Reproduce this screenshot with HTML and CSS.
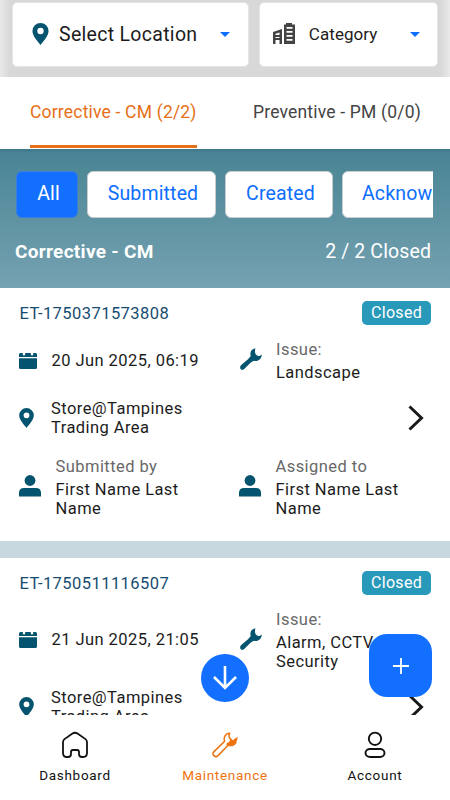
FILE: index.html
```html
<!DOCTYPE html>
<html lang="en">
<head>
<meta charset="utf-8">
<title>Maintenance</title>
<link rel="stylesheet" href="styles.css">
</head>
<body>
<svg class="defs" width="0" height="0">
  <symbol id="pin" viewBox="0 0 15 20"><path fill-rule="evenodd" d="M7.5 0A7.3 7.3 0 0 0 .2 7.3C.2 12 5 16.500 7.500 20 10 16.500 14.800 12 14.800 7.300A7.300 7.300 0 0 0 7.500 0zM7.500 4.400a2.900 2.900 0 1 1 0 5.800 2.900 2.900 0 0 1 0-5.800z"/></symbol>
  <symbol id="calendar" viewBox="0 0 18 17"><path d="M0 5V2.500Q0 1 1.500 1h2.300v1.200q0 1.200 1.200 1.200T6.200 2.200V1h5.600v1.200q0 1.200 1.200 1.200t1.200-1.200V1h2.300Q18 1 18 2.500V5zM0 6.300h18v9.200q0 1.500-1.500 1.500h-15Q0 17 0 15.500z"/></symbol>
  <symbol id="wrench" viewBox="0 0 22 22"><path d="M15.500.2c-4 .5-6.100 4-4.700 7.900L8 11.200 1.200 17.100c-1.800 1.700-1.200 4.700 1.300 4.700 1.100 0 1.900-.700 2.500-1.500l5.800-5.800 2.900-1.700c4.300 1 7.800-1.300 8.100-6.300-1.200 1.200-2.600 1.900-4.100 1.300-1.400-.6-2.500-1.900-2.600-3.400-.1-1.600-.3-2.600.4-4.200z"/></symbol>
  <symbol id="person" viewBox="0 0 22 22"><circle cx="11" cy="5.500" r="5.400"/><path d="M0 21.500v-3.500q0-5 5-5h12q5 0 5 5v3.500z"/></symbol>
  <symbol id="chevron" viewBox="0 0 16 26"><path d="M1.500 1.500 13.500 13 1.500 24.500" fill="none" stroke="#191919" stroke-width="3"/></symbol>
</svg>
<div class="app">
  <header class="filters">
    <div class="select location">
      <svg class="select-pin"><use href="#pin"/></svg><span>Select Location</span><i class="caret"></i>
    </div>
    <div class="select category">
      <svg class="building" viewBox="0 0 22 22"><path fill="#444" fill-rule="evenodd" d="M0 9 9 6v15H6.500v-4h-4v4H0zm2.500 1.800V12h4V9.500zM2.500 14v1h4v-1zM11 1.500h2V0h6v1.500h3V21H11zM13.500 4v1.800h6V4zm0 4v1.800h6V8zm0 4v1.800h6V12zm0 4v1.800h6V16z"/></svg><span>Category</span><i class="caret"></i>
    </div>
  </header>
  <nav class="tabs"><div class="tab active">Corrective - CM (2/2)</div><div class="tab">Preventive - PM (0/0)</div></nav>
  <section class="status">
    <div class="chips"><button class="chip on">All</button><button class="chip submitted">Submitted</button><button class="chip created">Created</button><button class="chip ack">Acknowledged</button></div>
    <div class="summary"><b>Corrective - CM</b><span>2 / 2 Closed</span></div>
  </section>
  <main class="list">
    <article class="card">
      <div class="card-head"><span class="ticket">ET-1750371573808</span><span class="badge">Closed</span></div>
      <div class="row">
        <div class="cell date"><svg class="i-cal"><use href="#calendar"/></svg><p>20 Jun 2025, 06:19</p></div>
        <div class="cell"><svg class="i-wrench"><use href="#wrench"/></svg><div><p class="label">Issue:</p><p>Landscape</p></div></div>
      </div>
      <div class="row place">
        <div class="cell"><svg class="i-pin"><use href="#pin"/></svg><p>Store@Tampines<br>Trading Area</p></div>
        <svg class="i-chev"><use href="#chevron"/></svg>
      </div>
      <div class="row people">
        <div class="cell by"><svg class="i-person"><use href="#person"/></svg><div><p class="label">Submitted by</p><p>First Name Last<br>Name</p></div></div>
        <div class="cell"><svg class="i-person"><use href="#person"/></svg><div><p class="label">Assigned to</p><p>First Name Last<br>Name</p></div></div>
      </div>
    </article>
    <article class="card">
      <div class="card-head"><span class="ticket">ET-1750511116507</span><span class="badge">Closed</span></div>
      <div class="row">
        <div class="cell date"><svg class="i-cal"><use href="#calendar"/></svg><p>21 Jun 2025, 21:05</p></div>
        <div class="cell"><svg class="i-wrench"><use href="#wrench"/></svg><div><p class="label">Issue:</p><p>Alarm, CCTV,<br>Security</p></div></div>
      </div>
      <div class="row place">
        <div class="cell"><svg class="i-pin"><use href="#pin"/></svg><p>Store@Tampines<br>Trading Area</p></div>
        <svg class="i-chev"><use href="#chevron"/></svg>
      </div>
    </article>
  </main>
  <footer class="bottom">
    <div class="nav-item"><svg viewBox="0 0 28 28"><path d="M2 11.200Q2 9.300 3.500 8.100L11.500 2.600q2.500-1.700 5 0l8 5.500Q26 9.300 26 11.200V22q0 4-4 4h-1q-3 0-3-3v-2q0-2-2-2h-4q-2 0-2 2v2q0 3-3 3H6q-4 0-4-4z" fill="none" stroke="currentColor" stroke-width="1.800"/></svg><span>Dashboard</span></div>
    <div class="nav-item current"><svg viewBox="0 0 28 28"><path d="M18.800 2c-4.500.7-6.500 4.300-5.200 8.200L3 20.600c-2.700 2.700 1.100 6.700 4 4L17 14.300c3.400.8 6.400-.4 8.300-3.300M18.800 2c-1.500 3-.5 6 2 6.500" fill="none" stroke="currentColor" stroke-width="1.500"/><path d="M19.300 7.800c2.500 3 4.500-.5 7.300-2.100.2 5-3.600 8.600-8.600 8.700l-3-.8 1.500-2c1.500.3 2.500-1.600 2.800-3.800z" fill="currentColor"/></svg><span>Maintenance</span></div>
    <div class="nav-item"><svg viewBox="0 0 28 28"><g fill="none" stroke="currentColor" stroke-width="1.900"><circle cx="14" cy="7.800" r="6.200"/><rect x="4.500" y="18" width="19" height="8" rx="4.500" ry="4"/></g></svg><span>Account</span></div>
  </footer>
  <div class="down"><svg viewBox="0 0 26 26"><path d="M13 1v22M2 12l11 11 11-11" fill="none" stroke="#fff" stroke-width="2.600"/></svg></div>
  <div class="add"><svg viewBox="0 0 16 16"><path d="M8 0v16M0 8h16" stroke="#fff" stroke-width="1.800"/></svg></div>
</div>
</body>
</html>
```
FILE: styles.css
```css
* { box-sizing: border-box; }
body { margin: 0; font-family: Roboto, sans-serif; font-size: 16.500px; font-weight: 400; letter-spacing: .44px; color: #1c1c1c; }
p { margin: 0; line-height: 19px; white-space: nowrap; }
svg { display: block; flex: none; fill: #04546f; }
.defs { position: absolute; }
.app { position: relative; width: 450px; height: 800px; overflow: hidden; display: flex; flex-direction: column; background: #fff; }
.filters { flex: none; height: 77px; display: flex; align-items: flex-start; gap: 10px; padding: 2px 12px 0 12px; background: linear-gradient(90deg, #e8e8e8, #d8d8d8 10px, #d8d8d8 440px, #e8e8e8); }
.select { height: 65px; padding-bottom: 1px; background: #fff; border: 1px solid #e5e5e5; border-radius: 5px; display: flex; align-items: center; white-space: nowrap; }
.location { width: 238px; padding-left: 19px; padding-right: 18px; font-size: 19.500px; letter-spacing: .3px; }
.category { width: 180px; padding-left: 13px; padding-right: 17px; font-size: 17px; letter-spacing: .05px; }
.select-pin { width: 17px; height: 22px; margin-right: 10px; }
.building { width: 22px; height: 22px; margin-right: 14px; }
.caret { margin-left: auto; border: 5.500px solid transparent; border-top-color: #0d6efd; border-bottom: 0; }
.tabs { flex: none; height: 72px; display: flex; justify-content: space-between; padding: 0 28px 0 29px; margin: 0 1px; background: #fff; font-size: 17.500px; letter-spacing: .19px; color: #444; white-space: nowrap; }
.tab { height: 71px; line-height: 70px; }
.active { color: #e67017; border-bottom: 3px solid #e67017; }
.status { flex: none; height: 139px; padding-top: 22px; background: linear-gradient(#3f7789, #4a8296 4px, #4d8796 15px, #75a2b2); }
.chips { display: flex; gap: 9px; margin: 0 17px 0 16px; overflow: hidden; }
.chip { flex: none; height: 47px; padding: 0 0 3px 3px; border: 1px solid #c8cdd0; border-radius: 6px; background: #fff; color: #0d6efd; font: 400 19.500px Roboto, sans-serif; letter-spacing: .15px; }
.on { width: 62px; background: #126fff; border-color: #3b7fe0; color: #fff; }
.submitted { width: 129px; }
.created { width: 108px; }
.ack { width: 165px; padding-left: 19px; text-align: left; }
.summary { display: flex; justify-content: space-between; padding: 0 19px 0 15px; margin-top: 20px; color: #fff; font-size: 19.500px; letter-spacing: .12px; line-height: 27px; }
.summary b { font-weight: 700; font-size: 19px; letter-spacing: .3px; }
.list { flex: none; height: 427px; overflow: hidden; background: #c7d8df; display: flex; flex-direction: column; gap: 17px; }
.card { flex: none; height: 253px; padding: 13px 19px 0; background: #fff; }
.card-head { display: flex; justify-content: space-between; height: 24px; line-height: 25px; margin-bottom: 15px; }
.ticket { color: #174c70; padding-left: .5px; }
.badge { width: 69px; text-align: center; background: #2999b9; color: #fff; border-radius: 5px; line-height: 24px; font-size: 16px; letter-spacing: .3px; }
.row { display: grid; grid-template-columns: 220px 1fr; align-items: center; }
.cell { display: flex; align-items: center; }
.label { color: #686868; margin-bottom: 4px; }
.i-cal { width: 18px; height: 17px; margin-right: 14.500px; }
.date { padding-bottom: 2px; }
.i-wrench { width: 22px; height: 22px; margin: 0 14px 4px 1px; }
.place { margin-top: 17px; }
.i-pin { width: 15px; height: 20px; margin-right: 17px; }
.i-chev { width: 16px; height: 26px; justify-self: end; margin-right: 7px; }
.people { margin-top: 20px; }
.i-person { width: 22px; height: 22px; margin: 0 14.500px 4px 0; }
.bottom { flex: none; height: 85px; display: grid; grid-template-columns: repeat(3, 150px); background: #fff; color: #111; }
.nav-item { display: flex; flex-direction: column; align-items: center; padding-top: 16px; font-size: 13.500px; letter-spacing: .7px; }
.nav-item svg { width: 28px; height: 28px; }
.nav-item span { line-height: 18px; margin-top: 7px; }
.current { color: #ee730f; }
.down { position: absolute; left: 201px; top: 654px; width: 48px; height: 48px; border-radius: 50%; background: #126fff; display: grid; place-items: center; }
.down svg { width: 26px; height: 26px; }
.add { position: absolute; left: 369px; top: 634px; width: 63px; height: 63px; border-radius: 18px; background: #126fff; display: grid; place-items: center; }
.add svg { width: 16px; height: 16px; }
```
